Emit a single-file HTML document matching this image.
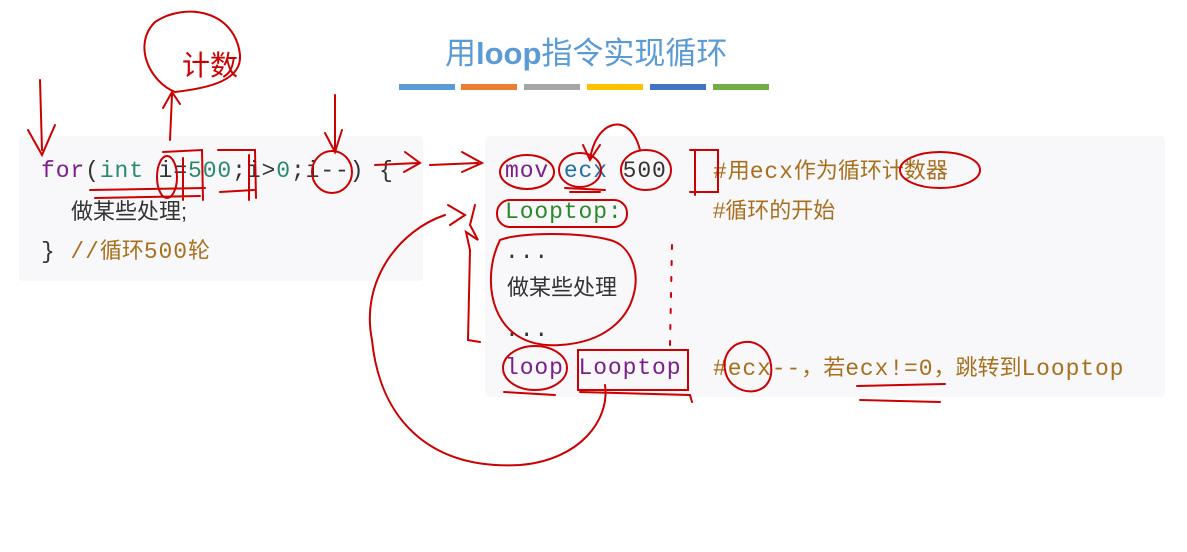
<!DOCTYPE html>
<html><head><meta charset="utf-8">
<style>
body{margin:0;width:1187px;height:552px;background:#fff;position:relative;overflow:hidden;font-family:"Liberation Sans","Noto Sans CJK SC",sans-serif}
.t{position:absolute;left:445px;top:28px;font-size:31px;color:#5b9bd5;white-space:nowrap;font-family:"Liberation Sans","Noto Sans CJK SC",sans-serif}
.t b{font-weight:bold}
.bar{position:absolute;top:84px;height:6px;width:56px}
.box{position:absolute;background:#f8f8fa;border-radius:4px}
.c{position:absolute;font-family:"Liberation Mono","Noto Sans CJK SC",monospace;font-size:23px;letter-spacing:0.9px;white-space:nowrap;color:#333;line-height:26px}
.cj{font-family:"Liberation Sans","Noto Sans CJK SC",sans-serif;letter-spacing:0;font-size:22px}
.k{color:#7a1f8a}.g{color:#2a8a6a}.cm{color:#a8701e}.b{color:#1f6fa8}.gr{color:#2a8a2a}
</style></head><body>
<div class="t">用<b>loop</b>指令实现循环</div>
<div class="bar" style="left:399px;background:#5b9bd5"></div>
<div class="bar" style="left:461px;background:#ed7d31"></div>
<div class="bar" style="left:524px;background:#a5a5a5"></div>
<div class="bar" style="left:587px;background:#ffc000"></div>
<div class="bar" style="left:650px;background:#4472c4"></div>
<div class="bar" style="left:713px;background:#70ad47"></div>

<div class="box" style="left:19px;top:136px;width:404px;height:145px"></div>
<div class="box" style="left:485px;top:136px;width:680px;height:261px"></div>

<div class="c" style="left:41px;top:158px"><span class="k">for</span>(<span class="g">int</span> i=<span class="g">500</span>;i&gt;<span class="g">0</span>;i--) {</div>
<div class="c cj" style="left:71px;top:199px">做某些处理;</div>
<div class="c" style="left:41px;top:238px">} <span class="cm">//<span class="cj">循环</span>500<span class="cj">轮</span></span></div>

<div class="c" style="left:505px;top:158px"><span class="k">mov</span> <span class="b">ecx</span> 500</div>
<div class="c cm" style="left:713px;top:158px">#<span class="cj">用</span>ecx<span class="cj">作为循环计数器</span></div>
<div class="c gr" style="left:505px;top:199px">Looptop:</div>
<div class="c cm cj" style="left:713px;top:198px">#循环的开始</div>
<div class="c" style="left:505px;top:239px">...</div>
<div class="c cj" style="left:507px;top:275px">做某些处理</div>
<div class="c" style="left:505px;top:317px">...</div>
<div class="c k" style="left:505px;top:355px">loop Looptop</div>
<div class="c cm" style="left:713px;top:355px">#ecx--<span class="cj">，若</span>ecx!=0<span class="cj">，跳转到</span>Looptop</div>

<svg width="1187" height="552" style="position:absolute;left:0;top:0" fill="none" stroke="#cc0000" stroke-width="2" stroke-linecap="round">
<path d="M40 80 L42 150 M28 130 L42 155 L55 125"/>
<path d="M170 140 L172 95 M163 108 L172 92 L180 104"/>
<path d="M175 92 C150 82 132 45 155 22 C185 2 235 10 240 55 C242 80 210 88 175 92Z"/>
<text x="182" y="75" fill="#cc0000" stroke="none" font-size="28" font-family="Noto Sans CJK SC">计数</text>
<path d="M335 95 L335 150 M325 133 L335 152 L342 130"/>
<ellipse cx="167" cy="177" rx="10" ry="21"/>
<ellipse cx="332" cy="172" rx="20" ry="21"/>
<path d="M163 152 L202 150 L203 200 M183 158 L183 200 M90 190 L205 188 M95 198 L200 196"/>
<path d="M218 150 L255 150 L256 198 M249 155 L249 200 M220 192 L254 190"/>
<path d="M375 165 L418 163 M405 152 L420 163 L404 172"/>
<path d="M430 165 L478 163 M462 152 L482 163 L462 172"/>
<ellipse cx="527" cy="172" rx="27" ry="17"/>
<ellipse cx="580" cy="170" rx="21" ry="17"/>
<ellipse cx="646" cy="170" rx="25" ry="20"/>
<path d="M565 188 L605 190 M570 192 L600 192"/>
<path d="M590 160 C595 120 630 110 640 150 M583 145 L590 160 L600 145"/>
<path d="M690 150 L718 150 L718 192 L690 192 M695 150 L695 195"/>
<ellipse cx="940" cy="170" rx="40" ry="18"/>
<rect x="497" y="200" width="130" height="27" rx="13"/>
<path d="M475 205 L470 225 L478 240 L466 232 L470 250 L468 340 L480 342"/>
<path d="M445 215 C400 230 360 280 372 340 C380 420 430 470 520 465 C580 460 610 420 605 385"/>
<path d="M448 205 L465 215 L450 225"/>
<path d="M500 240 C480 280 490 350 560 345 C650 340 650 250 610 240 C580 232 520 232 500 240Z"/>
<path d="M672 245 L670 345" stroke-dasharray="4 12"/>
<ellipse cx="535" cy="368" rx="32" ry="22"/>
<path d="M504 392 L555 395"/>
<rect x="578" y="350" width="110" height="40"/>
<path d="M580 392 L690 395 L692 402"/>
<path d="M725 370 C720 340 760 330 770 360 C780 400 730 400 725 370"/>
<path d="M857 386 L945 384 M860 400 L940 402"/>
</svg>
</body></html>
